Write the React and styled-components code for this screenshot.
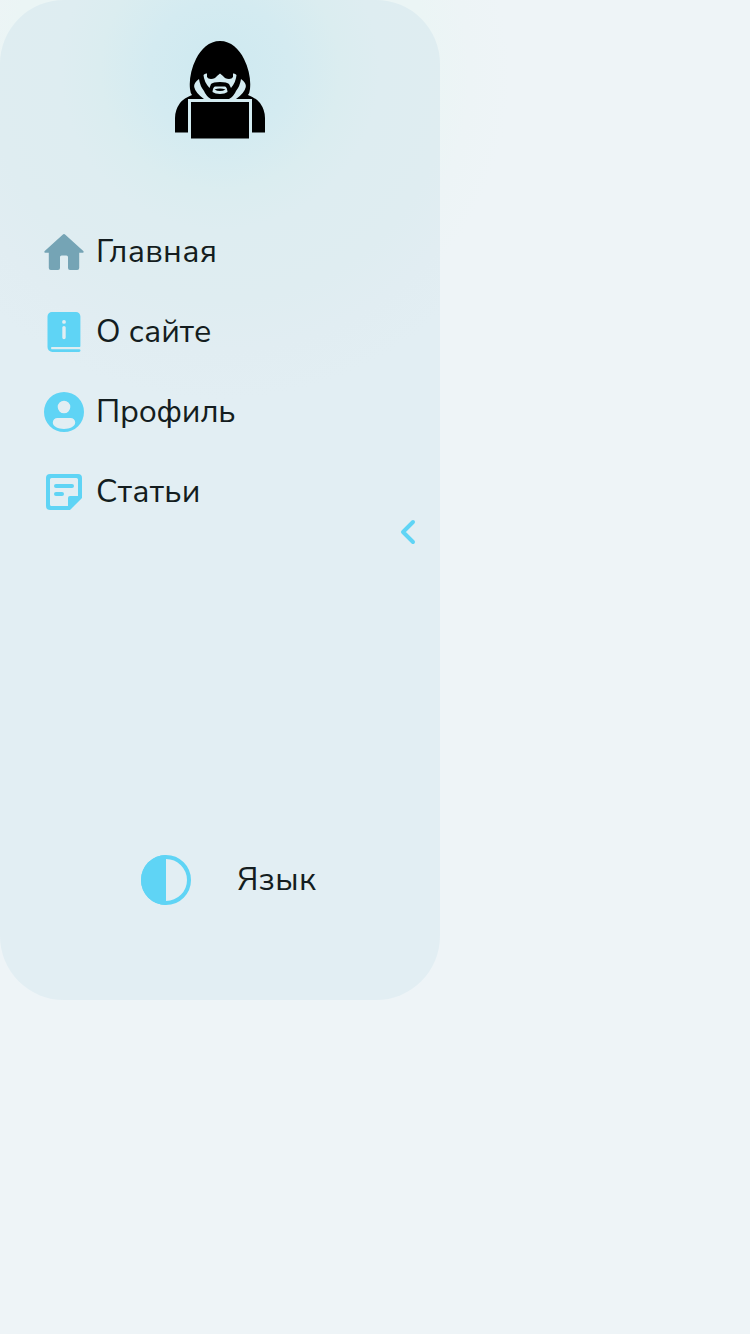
import React from "react";
import styled, { createGlobalStyle } from "styled-components";

const GlobalStyle = createGlobalStyle`
  * { box-sizing: border-box; }
  body {
    margin: 0;
    min-height: 100vh;
    background: radial-gradient(circle at 220px 75px, #ebf5f5 0, #ebf5f5 210px, #edf4f6 250px, #eef4f7 290px) #eef4f7;
    font-family: "Nunito Sans", Nunito, "Open Sans", "Noto Sans", sans-serif;
    color: #141d20;
  }
`;

const Sidebar = styled.aside`
  display: flex;
  flex-direction: column;
  width: 440px;
  height: 1000px;
  padding: 40px 20px 88px 40px;
  border-radius: 64px;
  background: radial-gradient(
    circle at 220px 70px,
    #cee9f0 0,
    #d4ebf1 70px,
    #dbedf0 120px,
    #deedf1 160px,
    #dfedf1 230px,
    #e1edf2 280px,
    #e2eef3 330px
  );
`;

const LogoLink = styled.a`
  display: flex;
  justify-content: center;
  width: 360px;
  height: 172px;
  padding-top: 1px;
`;

const Menu = styled.nav`
  display: flex;
  flex-direction: column;
  gap: 32px;
  height: 300px;
  padding-top: 16px;
`;

const MenuItem = styled.a`
  display: flex;
  align-items: center;
  gap: 8px;
  height: 48px;
  color: ${({ $active }) => ($active ? "#75a4b5" : "#5fd4f5")};
`;

const Label = styled.span`
  color: #141d20;
  font-size: 32px;
  line-height: 48px;
  white-space: nowrap;
  letter-spacing: ${({ $tracking = 0 }) => $tracking}px;
`;

const Icon = styled.svg`
  flex: none;
  width: ${({ $size = 48 }) => $size}px;
  height: ${({ $size = 48 }) => $size}px;
  fill: currentColor;
`;

const CollapseButton = styled.button`
  display: flex;
  align-self: flex-end;
  margin: -4px -12px 0 0;
  padding: 0;
  border: 0;
  background: none;
  color: #5fd4f5;
`;

const Footer = styled.footer`
  display: flex;
  align-items: center;
  gap: 41px;
  margin-top: auto;
  height: 64px;
  padding-left: 96px;
  color: #5fd4f5;
`;

const Logo = () => (
  <svg width="90" height="98" viewBox="0 0 90 98">
    <path d="M45 0C34 0 26 8 21 18C16 28 14 39 15 48Q15.4 52 17 54Q9 57 5 62Q0 69 0 77V91.5H13V58H77V91.5H90V77Q90 69 85 62Q81 57 73 54Q74.6 52 75 48C76 39 74 28 69 18C64 8 56 0 45 0Z" />
    <g fill="#d3ebf1">
      <path d="M24 38Q18.5 42 19.2 46Q20.5 52 29 58H36Q31 55 29 50Q25 45 24 38Z" />
      <path d="M66 38Q71.5 42 70.8 46Q69.5 52 61 58H54Q59 55 61 50Q65 45 66 38Z" />
      <path d="M28.5 34Q30 32 32 32.5V36Q33 38 36 38Q40 38 42 35L45 32.5L48 35Q50 38 54 38Q57 38 58 36V32.5Q60 32 61.5 34Q61 41 56 47L54 43Q52 41 45 41Q38 41 36 43L34.5 47Q29 41 28.5 34Z" />
      <path d="M40 45.5H50Q52 46 52.5 51Q50 53 45 53Q40 53 37.5 51Q38 46 40 45.5Z" />
    </g>
    <path d="M39.5 48.5Q45 46.5 50.5 48.5Q48 50 45 50Q42 50 39.5 48.5Z" />
    <path d="M14.5 97V59.5H75.5V97" fill="none" stroke="#d3ebf1" strokeWidth="2.6" />
    <rect x="16" y="61" width="58" height="36.5" />
  </svg>
);

const HomeIcon = () => (
  <Icon viewBox="0 0 24 24">
    <path d="M10 20v-5.500a.8.8 0 0 1 .8-.8h2.400a.8.8 0 0 1 .8.8V20a1 1 0 0 0 1 1h3.600a1 1 0 0 0 1-1v-7.600h1.700a.5.5 0 0 0 .34-.87l-8.970-8.180a1 1 0 0 0-1.340 0L2.360 11.530a.5.5 0 0 0 .34.870H4.400V20a1 1 0 0 0 1 1H9a1 1 0 0 0 1-1z" />
  </Icon>
);

const BookIcon = () => (
  <Icon viewBox="0 0 24 24">
    <path fillRule="evenodd" d="M6 2h12a2.200 2.200 0 0 1 2.200 2.200V19a.65.65 0 0 1-.65.65H5.700v.95h13.850a.7.7 0 0 1 0 1.400H6.200a2.450 2.450 0 0 1-2.450-2.450V4.200A2.200 2.200 0 0 1 6 2zM12 6a.95.95 0 1 0 0 1.900A.95.95 0 1 0 12 6zm-.85 3.800v4.950a.85.85 0 0 0 1.700 0V9.800a.85.85 0 0 0-1.700 0z" />
    <path d="M5.700 20h14.500" fill="none" stroke="#e0edf1" strokeWidth="1" />
  </Icon>
);

const ProfileIcon = () => (
  <Icon viewBox="0 0 24 24">
    <path fillRule="evenodd" d="M12 2a10 10 0 1 0 0 20 10 10 0 0 0 0-20zm0 4.350a3.150 3.150 0 1 1 0 6.300 3.150 3.150 0 0 1 0-6.300zM8.700 15h6.600a2.300 2.300 0 0 1 2.300 2.300c0 2-2.700 3.200-5.600 3.200s-5.600-1.200-5.600-3.200A2.300 2.300 0 0 1 8.700 15z" />
  </Icon>
);

const NoteIcon = () => (
  <Icon viewBox="0 0 24 24">
    <path fillRule="evenodd" d="M5 3h14a2 2 0 0 1 2 2v10l-6 6H5a2 2 0 0 1-2-2V5a2 2 0 0 1 2-2zm.8 2a.8.8 0 0 0-.8.8v12.400a.8.8 0 0 0 .8.8H14v-4a1 1 0 0 1 1-1h4V5.800a.8.8 0 0 0-.8-.8z" />
    <path d="M8 9h8M8 13h3" stroke="currentColor" strokeWidth="2" strokeLinecap="round" />
  </Icon>
);

const items = [
  { label: "Главная", Glyph: HomeIcon, active: true, tracking: 0.3 },
  { label: "О сайте", Glyph: BookIcon },
  { label: "Профиль", Glyph: ProfileIcon, tracking: -0.25 },
  { label: "Статьи", Glyph: NoteIcon, tracking: 0.25 },
];

export default function App() {
  return (
    <>
      <GlobalStyle />
      <Sidebar>
        <LogoLink>
          <Logo />
        </LogoLink>
        <Menu>
          {items.map(({ label, Glyph, active, tracking }) => (
            <MenuItem key={label} $active={active}>
              <Glyph />
              <Label $tracking={tracking}>{label}</Label>
            </MenuItem>
          ))}
        </Menu>
        <CollapseButton aria-label="Свернуть">
          <Icon viewBox="0 0 48 48">
            <path d="M29 14L19 24L29 34" fill="none" stroke="currentColor" strokeWidth="4" strokeLinecap="round" strokeLinejoin="round" />
          </Icon>
        </CollapseButton>
        <Footer>
          <Icon $size={60} viewBox="0 0 60 60">
            <circle cx="30" cy="30" r="23" fill="none" stroke="currentColor" strokeWidth="4" />
            <path d="M30 5a25 25 0 0 0 0 50z" />
          </Icon>
          <Label $tracking={0.4}>Язык</Label>
        </Footer>
      </Sidebar>
    </>
  );
}
